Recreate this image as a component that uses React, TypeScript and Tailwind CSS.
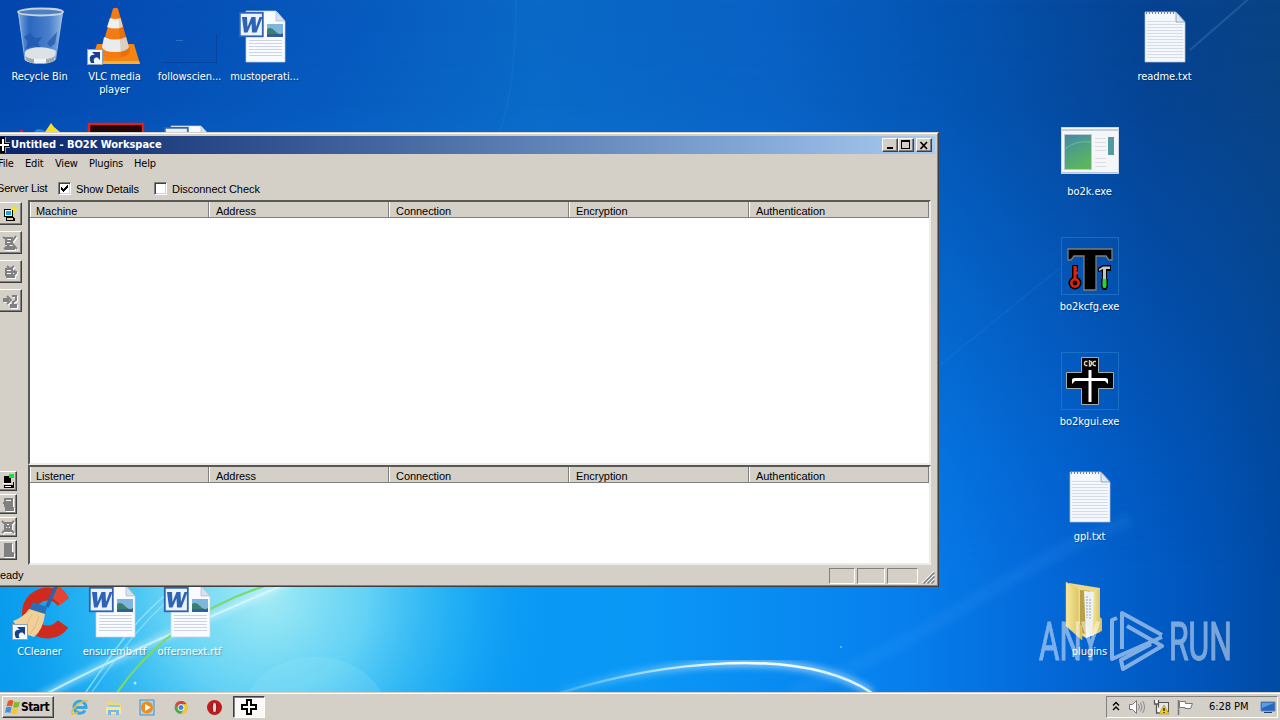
import type { ReactNode } from 'react'

const UI_FONT = "font-['DejaVu_Sans_Condensed','DejaVu_Sans',sans-serif]"

function Wallpaper() {
  return (
    <svg className="absolute inset-0" width="1280" height="720" viewBox="0 0 1280 720">
      <defs>
        <linearGradient id="sky" x1="0" y1="0" x2="1" y2="0">
          <stop offset="0" stopColor="#0345ad" />
          <stop offset="0.25" stopColor="#0757bd" />
          <stop offset="0.42" stopColor="#0a68c6" />
          <stop offset="0.6" stopColor="#0961c4" />
          <stop offset="0.75" stopColor="#0453b0" />
          <stop offset="0.9" stopColor="#064291" />
          <stop offset="1" stopColor="#094384" />
        </linearGradient>
        <linearGradient id="floor" x1="0" y1="0" x2="1" y2="0">
          <stop offset="0" stopColor="#079bec" />
          <stop offset="0.5" stopColor="#0a98f6" />
          <stop offset="0.7" stopColor="#0780ee" />
          <stop offset="0.82" stopColor="#0468d8" />
          <stop offset="0.93" stopColor="#0056bd" />
          <stop offset="1" stopColor="#004aa4" />
        </linearGradient>
        <linearGradient id="fade" x1="0" y1="0" x2="0" y2="1">
          <stop offset="0" stopColor="#fff" stopOpacity="0" />
          <stop offset="0.15" stopColor="#fff" stopOpacity="0.06" />
          <stop offset="0.65" stopColor="#fff" stopOpacity="0.85" />
          <stop offset="0.8" stopColor="#fff" />
        </linearGradient>
        <mask id="floorMask">
          <rect width="1280" height="720" fill="url(#fade)" />
        </mask>
        <radialGradient id="glow" gradientUnits="userSpaceOnUse" cx="265" cy="595" r="290">
          <stop offset="0" stopColor="#a4ecf4" />
          <stop offset="0.35" stopColor="#74dcf6" stopOpacity="0.85" />
          <stop offset="0.7" stopColor="#2fbdf6" stopOpacity="0.5" />
          <stop offset="1" stopColor="#0a98f6" stopOpacity="0" />
        </radialGradient>
        <linearGradient id="arc" x1="0" y1="0" x2="1" y2="0">
          <stop offset="0" stopColor="#bff0ff" stopOpacity="0.2" />
          <stop offset="0.55" stopColor="#fff" />
          <stop offset="1" stopColor="#d8f4ff" />
        </linearGradient>
        <filter id="soft">
          <feGaussianBlur stdDeviation="3" />
        </filter>
      </defs>
      <rect width="1280" height="720" fill="url(#sky)" />
      <rect width="1280" height="720" fill="url(#floor)" mask="url(#floorMask)" />
      <rect width="1280" height="720" fill="url(#glow)" />
      <g fill="none">
        <path d="M40 697C120 655 190 625 330 565" stroke="#dffaff" strokeOpacity="0.5" strokeWidth="7" filter="url(#soft)" />
        <path d="M40 697C120 655 190 625 330 565" stroke="#dffaff" strokeOpacity="0.7" strokeWidth="2" />
        <path d="M86 692C112 655 128 625 175 587" stroke="#a9ecfb" strokeOpacity="0.7" strokeWidth="1.5" />
        <path d="M92 692C122 650 150 610 190 584" stroke="#a9ecfb" strokeOpacity="0.5" strokeWidth="1.5" />
        <path d="M116 694C150 645 200 606 268 585" stroke="#79d96b" strokeWidth="2.2" />
        <path d="M560 693C660 662 800 645 872 693" stroke="url(#arc)" strokeWidth="8" strokeOpacity="0.5" filter="url(#soft)" />
        <path d="M560 693C660 662 800 645 872 693" stroke="url(#arc)" strokeWidth="2.5" />
        <path d="M790 693C920 648 1020 560 1130 520" stroke="#4fb3ff" strokeOpacity="0.1" strokeWidth="14" filter="url(#soft)" />
        <path d="M940 365L1060 268" stroke="#5cc0ff" strokeOpacity="0.08" strokeWidth="2" />
        <path d="M1190 50L1252 -4" stroke="#8fc4e8" strokeOpacity="0.18" strokeWidth="2" />
        <path d="M500 132C510 100 515 70 516 0" stroke="#59b2ea" strokeOpacity="0.08" strokeWidth="2" />
      </g>
      <ellipse cx="315" cy="715" rx="72" ry="58" fill="#a9eefb" fillOpacity="0.16" />
      <circle cx="135" cy="683" r="1.5" fill="#dffaff" fillOpacity="0.7" />
      <circle cx="841" cy="647" r="1.2" fill="#7cc4ff" fillOpacity="0.7" />
    </svg>
  )
}

function Shortcut() {
  return (
    <g>
      <rect x="2.5" y="42.5" width="15" height="15" fill="#f4f8fc" stroke="#8fa3b8" />
      <path d="M6 56C3 50 6 47 10 48L7 45H15V53L12.500 50.500C9 50 8 53 9.500 56Z" fill="#17418f" />
    </g>
  )
}

function RecycleBin() {
  return (
    <>
      <defs>
        <linearGradient id="glass" x1="0" y1="0" x2="1" y2="0">
          <stop offset="0" stopColor="#b6d2f0" stopOpacity="0.75" />
          <stop offset="0.25" stopColor="#4b82cc" stopOpacity="0.55" />
          <stop offset="0.7" stopColor="#7ba6de" stopOpacity="0.6" />
          <stop offset="1" stopColor="#d3e4f7" stopOpacity="0.75" />
        </linearGradient>
      </defs>
      <path d="M8 5L15 53C20 58 40 58 45 53L53 5Z" fill="url(#glass)" />
      <path d="M20 26l5 5 7-1-4 6 3 6-8-3-7 3 2-7-4-5z" fill="#2059b0" fillOpacity="0.85" />
      <path d="M37 36l10-11-2 12-5 3z" fill="#2059b0" fillOpacity="0.75" />
      <path d="M15 45C18 39 38 39 46 44L45 53C39 58 20 58 15 53Z" fill="#dce2e5" />
      <path d="M15 49C22 54 38 54 45 49L44 54C38 58 20 58 16 53Z" fill="#9da9b3" />
      <path d="M24 52h12v4h-12z" fill="#eef4f6" />
      <ellipse cx="30.500" cy="5" rx="22.500" ry="3.500" fill="#4e80c0" stroke="#c6d3e0" strokeWidth="1.800" />
      <path d="M8.500 6L15 53M52.500 6L45.500 53" stroke="#a9c4e2" strokeWidth="0.800" />
    </>
  )
}

function Vlc() {
  return (
    <>
      <path d="M12 37H49L55 57H12L7 52Z" fill="#f58413" />
      <path d="M12 54H54L55 57H12Z" fill="#ffb02e" />
      <path d="M28 1.500Q30 0 33 1.500L45 44Q45 51 30.500 51T16 44Z" fill="#f47a12" />
      <path d="M25 11Q30 13 35.500 11L38 20Q30 23 22 20Z" fill="#eef0ef" />
      <path d="M19 30Q30 35 41 30L44 40Q42 45 30 45T17 40Z" fill="#e9eceb" />
      <path d="M34 2L45 44Q44 49 36 50L33 2Z" fill="#a34600" fillOpacity="0.18" />
      <Shortcut />
    </>
  )
}

function GhostFile() {
  return (
    <>
      <rect x="3" y="27" width="53" height="28" fill="#0a4fae" fillOpacity="0.25" />
      <path d="M3 55.500H57M56.500 27V56" stroke="#063b8c" strokeOpacity="0.6" />
      <path d="M16 33.500h7" stroke="#3f83d2" strokeOpacity="0.6" />
    </>
  )
}

function WordDoc() {
  return (
    <>
      <path d="M11 4H41L50 14V55H11Z" fill="#f8fbff" stroke="#c6d1df" strokeWidth="0.700" />
      <path d="M41 4V14H50Z" fill="#d8e2ee" stroke="#9fb0c4" strokeWidth="0.600" />
      <path d="M14 33.500H47M14 36.500H47M14 39.500H47M14 42.500H47M14 45.500H47M14 48.500H47" stroke="#cdd3e4" />
      <rect x="32" y="17" width="16" height="13" fill="#7fb6de" />
      <path d="M32 22Q36 19 40 24T48 26V30H32Z" fill="#3a7f70" />
      <path d="M32 27H48V30H32Z" fill="#355f93" />
      <rect x="4.800" y="5.800" width="23" height="23.500" fill="#eaf2fc" stroke="#2c62b8" strokeWidth="1.800" />
      <path d="M7 10h5l.5 10 4-10h4l.5 10 3.500-10h3l-6 15.500h-4.500l-.5-9-4 9H9z" fill="#2e62b4" />
    </>
  )
}

function Notepad() {
  return (
    <>
      <path d="M10 5H41L50 15V55H10Z" fill="#f4f7fb" stroke="#b7c3d3" strokeWidth="0.700" />
      <path d="M11.500 4v3M14.500 4v3M17.500 4v3M20.500 4v3M23.500 4v3M26.500 4v3M29.500 4v3M32.500 4v3M35.500 4v3M38.500 4v3" stroke="#73859e" />
      <path d="M12 14.500H40M12 17.500H48M12 20.500H48M12 23.500H48M12 26.500H48M12 29.500H48M12 32.500H48M12 35.500H48M12 38.500H48M12 41.500H48M12 44.500H48M12 47.500H48M12 50.500H48" stroke="#d5dce7" />
      <path d="M41 5L50 15H41Z" fill="#dfe7f0" stroke="#8496ae" strokeWidth="0.800" />
    </>
  )
}

function CCleaner() {
  return (
    <>
      <path d="M53 20A19 19 0 1 0 53 42" fill="none" stroke="#ce2b1e" strokeWidth="13" />
      <path d="M48 4A27 27 0 0 1 59 16L50 23Q46 17 40 16Z" fill="#e44532" />
      <path d="M47 2L37 25" stroke="#2467ae" strokeWidth="3.500" />
      <path d="M23 20L37 25L35 32L19 28Z" fill="#286fb8" />
      <path d="M19 27L35 32Q33 48 24 55Q10 51 3 39Q14 35 19 27Z" fill="#f1cf98" />
      <path d="M22 32Q18 42 12 47M29 34Q27 44 20 52" stroke="#e0ba80" fill="none" />
      <Shortcut />
    </>
  )
}

function Browser() {
  return (
    <>
      <path d="M24 10Q28 4 36 10Z" fill="#1e87ef" />
      <path d="M35 10L41 1L44 5L50 10Z" fill="#f7df28" />
      <path d="M10 8h3v2h-3z" fill="#c02c5e" />
    </>
  )
}

function DarkApp() {
  return (
    <>
      <rect x="4" y="2" width="54" height="54" fill="#220708" stroke="#dd2222" strokeWidth="2.500" />
    </>
  )
}

function ExeWindow() {
  return (
    <>
      <defs>
        <linearGradient id="pane" x1="0" y1="0" x2="0.4" y2="1">
          <stop offset="0" stopColor="#4b84a8" />
          <stop offset="0.4" stopColor="#4b9c8b" />
          <stop offset="1" stopColor="#5cb55e" />
        </linearGradient>
      </defs>
      <rect x="1.500" y="5.500" width="57" height="46" fill="#f4f6f8" stroke="#cdd8e4" />
      <path d="M2 8h56" stroke="#c5d0dc" strokeWidth="2" />
      <rect x="4.500" y="12.500" width="27" height="35" fill="url(#pane)" stroke="#b9cdd6" />
      <path d="M5 27Q16 18 31 20" stroke="#8cc4ba" strokeOpacity="0.6" fill="none" />
      <path d="M35 16.500h11M35 20.500h11M35 24.500h11M35 28.500h11M35 36.500h11M35 40.500h11M35 44.500h11" stroke="#dadde1" />
      <rect x="48" y="15" width="6" height="18" fill="#5299a2" />
      <path d="M2 50.500h56" stroke="#bcc9da" />
    </>
  )
}

function Frame() {
  return <rect x="1.500" y="0.500" width="57" height="57" fill="none" stroke="#297cc6" strokeOpacity="0.65" />
}

function CfgIcon() {
  return (
    <>
      <Frame />
      <path d="M8 12H52V23H49L46 19H36V53H24V19H14L11 23H8Z" fill="#000" stroke="#7e7f79" strokeWidth="1.300" />
      <path d="M15 28V43" stroke="#000" strokeWidth="6" />
      <circle cx="15" cy="46" r="6.500" fill="#000" />
      <path d="M15 29V43M17 32h-2M18 36h-3" stroke="#e2200c" strokeWidth="3" />
      <circle cx="15" cy="46" r="3.700" fill="none" stroke="#e2200c" strokeWidth="2.600" />
      <path d="M38 35V31L43 28H51V34H47V42H48V50L46 53H43L41 50V42H42V34Z" fill="#000" />
      <path d="M39 34V32L43 29.500H50V32H46V42H43V32Z" fill="#c4c7c3" />
      <path d="M42.500 42H46.500V49L45.500 51H43.500L42.500 49Z" fill="#18df28" />
    </>
  )
}

function GuiIcon() {
  return (
    <>
      <Frame />
      <path d="M21.500 5.500H38.500V20.500H53.500V36.500H38.500V52.500H21.500V36.500H6.500V20.500H21.500Z" fill="#000" stroke="#a5aba4" />
      <path d="M30 18V50" stroke="#fff" strokeWidth="3" />
      <path d="M12 32V28Q12 26 15 26H45Q48 26 48 28V32L45 29H15Z" fill="#fff" />
      <path d="M27.500 9.500h-2l-1 1v2l1 1h2M29.500 8v6h1l1-2v-2l-1-1M36 9.500h-2l-1 1v2l1 1h2" stroke="#d8cdb6" strokeWidth="1.400" fill="none" />
    </>
  )
}

function Folder() {
  return (
    <>
      <defs>
        <linearGradient id="folder" x1="0" y1="0" x2="1" y2="0">
          <stop offset="0" stopColor="#f7e9a1" />
          <stop offset="1" stopColor="#d9bb58" />
        </linearGradient>
      </defs>
      <path d="M9 1L40 6V50L26 56L9 46Z" fill="#ecd987" />
      <path d="M20 8L30 9V54L20 50Z" fill="#b99f47" />
      <path d="M24 9L34 10V53L26 56Z" fill="#eef1f2" />
      <path d="M27 14v22M30 17v20" stroke="#9ba9b6" strokeDasharray="2 1" />
      <path d="M34 9L40 7V35L42 37V49L32 53Z" fill="url(#folder)" />
      <path d="M6 0L18 7V41L22 44V58L6 44Z" fill="url(#folder)" stroke="#dfc669" strokeWidth="0.500" />
    </>
  )
}

interface DesktopItem {
  label: string
  col: number
  row: number
  icon: ReactNode
}

const desktopItems: DesktopItem[] = [
  { label: 'Recycle Bin', col: 2, row: 0, icon: <RecycleBin /> },
  { label: 'VLC media player', col: 77, row: 0, icon: <Vlc /> },
  { label: 'followscien...', col: 152, row: 0, icon: <GhostFile /> },
  { label: 'mustoperati...', col: 227, row: 0, icon: <WordDoc /> },
  { label: '', col: 2, row: 115, icon: <Browser /> },
  { label: '', col: 77, row: 115, icon: <DarkApp /> },
  { label: '', col: 152, row: 115, icon: <WordDoc /> },
  { label: 'CCleaner', col: 2, row: 575, icon: <CCleaner /> },
  { label: 'ensuremb.rtf', col: 77, row: 575, icon: <WordDoc /> },
  { label: 'offersnext.rtf', col: 152, row: 575, icon: <WordDoc /> },
  { label: 'readme.txt', col: 1127, row: 0, icon: <Notepad /> },
  { label: 'bo2k.exe', col: 1052, row: 115, icon: <ExeWindow /> },
  { label: 'bo2kcfg.exe', col: 1052, row: 230, icon: <CfgIcon /> },
  { label: 'bo2kgui.exe', col: 1052, row: 345, icon: <GuiIcon /> },
  { label: 'gpl.txt', col: 1052, row: 460, icon: <Notepad /> },
  { label: 'plugins', col: 1052, row: 575, icon: <Folder /> },
]

function DesktopIcon({ item }: { item: DesktopItem }) {
  return (
    <div className="absolute w-[75px] pt-[7px] flex flex-col" style={{ left: item.col, top: item.row }}>
      <svg className="ml-2" width="60" height="60" viewBox="0 0 60 60">
        {item.icon}
      </svg>
      <span
        className={`mt-[3px] px-0.5 text-center text-[11px] leading-[13px] tracking-[-0.07px] text-white [text-shadow:1px_1px_1px_rgba(0,0,0,0.3)] ${UI_FONT}`}
      >
        {item.label}
      </span>
    </div>
  )
}

function Watermark() {
  return (
    <svg className="absolute left-[1030px] top-[605px]" width="230" height="72" viewBox="0 0 230 72">
      <g fill="#fff" stroke="#fff" strokeWidth="1.200" opacity="0.48" fontFamily="Roboto, sans-serif" fontSize="53">
        <text x="9" y="55" textLength="61" lengthAdjust="spacingAndGlyphs">ANY</text>
        <text x="139" y="55" textLength="63" lengthAdjust="spacingAndGlyphs">RUN</text>
      </g>
      <g fill="none" stroke="#fff" opacity="0.5" strokeWidth="4" strokeLinejoin="round">
        <path d="M92 44V8L132 30" />
        <path d="M87 13L82 15V54L132 32" />
        <path d="M97 21L132 41L93 64L91 55L121 39" />
      </g>
    </svg>
  )
}

function Raised({ className, children }: { className: string; children?: ReactNode }) {
  return (
    <div
      className={`flex items-center justify-center bg-[#d4d0c8] border border-t-white border-l-white border-r-[#404040] border-b-[#404040] shadow-[inset_-1px_-1px_0_#808080] ${className}`}
    >
      {children}
    </div>
  )
}

function CrossGlyph() {
  return (
    <svg width="16" height="16" viewBox="0 0 16 16" shapeRendering="crispEdges">
      <path d="M5 0H11V5H16V11H11V16H5V11H0V5H5Z" fill="#000" />
      <path d="M7 2H9V7H14V9H9V14H7V9H2V7H7Z" fill="#fff" />
    </svg>
  )
}

function ServerGlyph() {
  return (
    <svg width="16" height="16" viewBox="0 0 16 16" shapeRendering="crispEdges">
      <path d="M2 3h9v8H2z" fill="#000" />
      <path d="M3 4h7v6H3z" fill="#fff" />
      <path d="M4 5h5v4H4z" fill="#1aa6d8" />
      <path d="M4 11h8v1h1v3H4z" fill="#000" />
      <path d="M5 12h6v2H5z" fill="#d8d6a0" />
      <path d="M11 0h2v2h3v2h-3v3h-2V4H9V2h2z" fill="#f2e62c" />
    </svg>
  )
}

// Disabled buttons show an embossed grey shape with a white offset copy.
function Embossed({ d }: { d: string }) {
  return (
    <svg width="16" height="16" viewBox="0 0 16 16">
      <path d={d} transform="translate(1 1)" fill="none" stroke="#fff" strokeWidth="2" />
      <path d={d} fill="none" stroke="#808080" strokeWidth="2" />
    </svg>
  )
}

const serverGlyphs = [
  'M4 3h6v6H4zM4 6h6M4 12h8v2H3M1 2l4 3M14 1l-5 7-7 6M9 7l6 7',
  'M4 5h6v6H4zM4 8h6M4 13h9M5 2l3 3 4-3M10 8h5M12 6l2 3-3 3',
  'M1 6h6M1 8h6M5 3l4 4-4 4M10 3h4v4l-4 3M8 12h6v2H8M11 8v4',
]

const listenerGlyphs = [
  'M5 3h7v7H5zM5 6h7M5 8h7M3 7h5M5 12h8v2H5',
  'M2 2l12 12M14 2L2 14M5 4h6v6H5zM5 7h6M5 12h8',
  'M5 2h6v8H5zM7 3v7M9 3v7M4 12h9v2H4M11 10l3 2',
]

const serverColumns = ['Machine', 'Address', 'Connection', 'Encryption', 'Authentication']
const listenerColumns = ['Listener', 'Address', 'Connection', 'Encryption', 'Authentication']

function ListView({ columns, className }: { columns: string[]; className: string }) {
  return (
    <div className={`w-[903px] bg-white border-2 border-t-[#5a5853] border-l-[#5a5853] border-r-[#eeece8] border-b-[#eeece8] ${className}`}>
      <div className="flex h-4">
        {columns.map((name, i) => (
          <div
            key={name}
            className={`h-4 leading-[15px] pt-0.5 bg-[#d4d0c8] border-b border-r border-[#808080] shadow-[inset_1px_0_0_#fff] ${i === 0 ? 'w-[179px] pl-1.5' : 'w-[180px] pl-[7px]'}`}
          >
            {name}
          </div>
        ))}
      </div>
    </div>
  )
}

function Checkbox({ checked }: { checked: boolean }) {
  return (
    <div className="w-[13px] h-[13px] bg-white border border-t-[#808080] border-l-[#808080] border-r-white border-b-white shadow-[inset_1px_1px_0_#404040,inset_-1px_-1px_0_#d4d0c8]">
      {checked && (
        <svg width="11" height="11" viewBox="0 0 11 11" shapeRendering="crispEdges">
          <path d="M2 4h1v1h1v1h1V5h1V4h1V3h1V2h1v3H8v1H7v1H6v1H5v1H4V8H3V7H2z" fill="#000" />
        </svg>
      )}
    </div>
  )
}

function WorkspaceWindow() {
  return (
    <div className="absolute left-[-5px] top-[132px] w-[944px] h-[455px] flex flex-col bg-[#d4d0c8] border border-t-[#d4d0c8] border-l-[#d4d0c8] border-r-[#404040] border-b-[#404040] font-['Liberation_Sans',Arial,sans-serif] text-[11px] tracking-[-0.05px] text-black">
      <div className="flex-1 flex flex-col pt-0.5 pl-[3px] pr-0.5 border-t border-t-white border-r border-r-[#808080] border-b border-b-[#808080]">
        <div className="flex items-center h-[18px] pr-[3px] bg-linear-to-r from-[#0a246a] to-[#a6caf0]">
          <div className="w-3 overflow-hidden flex justify-end shrink-0">
            <svg className="shrink-0" width="16" height="16" viewBox="0 0 16 16" shapeRendering="crispEdges">
              <path d="M3 0H11V5H15V11H11V16H3Z" fill="#000" />
              <path d="M10 0h1v5h4v1h-5zM10 10h5v1h-4v5h-1z" fill="#9a9a9a" />
              <path d="M7 2H9V7H14V9H9V14H7V9H2V7H7Z" fill="#fff" />
            </svg>
          </div>
          <span className={`flex-1 text-white font-bold tracking-[-0.02px] ${UI_FONT}`}>Untitled - BO2K Workspace</span>
          <div className="flex">
            <Raised className="w-4 h-3.5">
              <svg width="12" height="10" viewBox="0 0 12 10" shapeRendering="crispEdges"><path d="M3 7h6v2H3z" /></svg>
            </Raised>
            <Raised className="w-4 h-3.5">
              <svg width="12" height="10" viewBox="0 0 12 10" shapeRendering="crispEdges"><path fillRule="evenodd" d="M1 0h9v9H1zM2 2h7v6H2z" /></svg>
            </Raised>
            <Raised className="w-4 h-3.5 ml-0.5">
              <svg width="10" height="9" viewBox="0 0 10 9"><path d="M1.500 1L8 8M8 1L1.500 8" stroke="#000" strokeWidth="1.700" /></svg>
            </Raised>
          </div>
        </div>

        <div className={`flex h-5 items-center pt-px tracking-[-0.2px] ${UI_FONT}`}>
          <span className="w-[26px] -ml-px mr-px">File</span>
          <span className="w-[30px]">Edit</span>
          <span className="w-[34px]">View</span>
          <span className="w-[45px]">Plugins</span>
          <span>Help</span>
        </div>

        <div className="flex h-[26px] pt-2 items-start leading-[13px]">
          <span className="w-[59px] -ml-0.5 mr-0.5 tracking-[-0.2px]">Server List</span>
          <Checkbox checked />
          <span className="w-[78px] ml-[5px] pt-px tracking-[-0.12px]">Show Details</span>
          <Checkbox checked={false} />
          <span className="ml-[5px] pt-px">Disconnect Check</span>
        </div>

        <div className="flex h-[365px]">
          <div className="w-[29px] flex flex-col items-start pt-0.5">
            <Raised className="w-[23px] h-[23px] mb-1.5 pr-0.5"><ServerGlyph /></Raised>
            {serverGlyphs.map((d) => (
              <Raised key={d} className="w-[23px] h-[23px] mb-1.5 pr-0.5"><Embossed d={d} /></Raised>
            ))}
            <div className="mt-[153px] flex flex-col gap-[3px]">
              <Raised className="w-[18px] h-5">
                <svg width="16" height="16" viewBox="0 0 16 16" shapeRendering="crispEdges">
                  <path d="M4 3h7v7H4zM4 12h9V9h1v6H4z" fill="#000" />
                  <path d="M3 10h8v1H3zM5 13h6v1H5z" fill="#fff" />
                  <path d="M9 1h5v4H9z" fill="#1be03a" />
                </svg>
              </Raised>
              {listenerGlyphs.map((d) => (
                <Raised key={d} className="w-[18px] h-5"><Embossed d={d} /></Raised>
              ))}
            </div>
          </div>
          <div>
            <ListView columns={serverColumns} className="h-[265px]" />
            <ListView columns={listenerColumns} className="h-[100px]" />
          </div>
        </div>

        <div className="flex flex-1 items-center">
          <span className="-ml-[7px] flex-1">Ready</span>
          <div className="flex gap-0.5 pt-px">
            <div className="w-[26px] h-4 border border-t-[#808080] border-l-[#808080] border-r-white border-b-white" />
            <div className="w-7 h-4 border border-t-[#808080] border-l-[#808080] border-r-white border-b-white" />
            <div className="w-[31px] h-4 border border-t-[#808080] border-l-[#808080] border-r-white border-b-white" />
          </div>
          <svg className="ml-1 mt-1" width="13" height="13" viewBox="0 0 13 13">
            <path d="M0 12L12 0M4 12L12 4M8 12L12 8" stroke="#fff" />
            <path d="M1.500 12.500L12.500 1.500M5.500 12.500L12.500 5.500M9.500 12.500L12.500 9.500" stroke="#808080" strokeWidth="1.500" />
          </svg>
        </div>
      </div>
    </div>
  )
}

function WindowsFlag() {
  return (
    <svg width="16" height="16" viewBox="0 0 16 16">
      <path d="M3 2Q6 0 8.500 2L7 7.500Q4 6 1.500 7.500Z" fill="#e8572a" />
      <path d="M9.500 2.500Q12 4 15 2.500L13.500 8Q11 9.500 8 8Z" fill="#7fba35" />
      <path d="M1.200 8.500Q4 7 6.700 8.500L5.200 14Q3 12.500 0 14Z" fill="#3f8fdd" />
      <path d="M7.700 9Q10 10.500 13.200 9L11.700 14.500Q9 16 6.200 14.500Z" fill="#f9c62d" />
    </svg>
  )
}

function Taskbar() {
  return (
    <div className={`absolute left-0 bottom-0 w-[1280px] h-7 flex items-start pt-[3px] bg-[#d4d0c8] border-t border-t-[#d4d0c8] shadow-[inset_0_1px_0_#fff] text-[11px] text-black ${UI_FONT}`}>
      <Raised className="ml-0.5 w-[52px] h-[22px] pr-0.5 font-bold text-[12px] tracking-[-0.5px]">
        <WindowsFlag />
        Start
      </Raised>
      <div className="flex gap-4 ml-[17px] mt-[3px]">
        <svg width="18" height="17" viewBox="0 0 18 17">
          <path d="M14 11.500A6 6 0 1 1 15 8.500H5" fill="none" stroke="#3ca5df" strokeWidth="3" />
          <path d="M1 15C-1 10 12 0 17 2" fill="none" stroke="#eabf3c" strokeWidth="1.500" />
          <path d="M1 15Q3 16 7 13" fill="none" stroke="#eabf3c" strokeWidth="1.500" />
        </svg>
        <svg width="18" height="17" viewBox="0 0 18 17">
          <path d="M2 2h6l1 2h7v10H2z" fill="#f0d873" />
          <path d="M3 6h12v3H3z" fill="#8fcbea" />
          <path d="M1 8h15v7H1z" fill="#f6e69a" />
          <path d="M3 16v-5h11v5h-3v-3H6v3z" fill="#79b9e2" />
        </svg>
        <svg width="17" height="17" viewBox="0 0 17 17">
          <rect x="1" y="1" width="14" height="15" fill="#a9d4ef" stroke="#4b91c5" />
          <circle cx="8" cy="8.500" r="6" fill="#f38a17" />
          <path d="M6 5l6 3.500L6 12z" fill="#fff" />
        </svg>
        <svg width="18" height="17" viewBox="0 0 18 17">
          <circle cx="9" cy="8.500" r="6.500" fill="#4ca94e" />
          <path d="M3.400 5.200A6.500 6.500 0 0 1 14.700 5.300H9L6.200 10.200Z" fill="#df4335" />
          <path d="M14.700 5.300A6.500 6.500 0 0 1 9 15L12 9.500L11 5.300Z" fill="#f7c92d" />
          <circle cx="9" cy="8.500" r="3" fill="#3e80e6" stroke="#fff" />
        </svg>
        <svg width="18" height="17" viewBox="0 0 18 17">
          <ellipse cx="8.500" cy="8.500" rx="7.500" ry="7.500" fill="#c4191c" />
          <ellipse cx="8.500" cy="8.500" rx="2.200" ry="5.200" fill="#e8d4d0" stroke="#7e0b0d" />
        </svg>
      </div>
      <div className="ml-[9px] w-8 h-[22px] flex items-center justify-center bg-[#faf9f7] border border-t-[#404040] border-l-[#404040] border-r-white border-b-white shadow-[inset_1px_1px_0_#808080]">
        <CrossGlyph />
      </div>
      <div className="ml-auto mr-0.5 w-[172px] h-[22px] flex items-center border border-t-[#808080] border-l-[#808080] border-r-white border-b-white">
        <svg className="ml-[5px]" width="8" height="12" viewBox="0 0 8 12">
          <path d="M1 4.500l3-3 3 3M1 9l3-3 3 3" fill="none" stroke="#000" strokeWidth="1.400" />
        </svg>
        <svg className="ml-2" width="18" height="16" viewBox="0 0 18 16">
          <path d="M1.500 5.500h3l4-4v13l-4-4h-3z" fill="#fff" stroke="#777" />
          <path d="M10.500 5q2 3 0 6M12.500 3.500q3 4.500 0 9M14.500 2q4 6 0 12" fill="none" stroke="#8b8b8b" />
        </svg>
        <svg className="ml-[7px]" width="17" height="16" viewBox="0 0 17 16">
          <rect x="5.500" y="3.500" width="10" height="9" fill="#dfe5e8" stroke="#555" />
          <path d="M1.500 1v4h4V1M3.500 5v9h5" fill="#fff" stroke="#555" strokeWidth="1.300" />
          <path d="M11 6l5 9H6z" fill="#f5ce20" stroke="#a88600" strokeWidth="0.600" />
          <path d="M11 9v3M11 13v1" stroke="#000" strokeWidth="1.200" />
        </svg>
        <svg className="ml-[7px]" width="17" height="16" viewBox="0 0 17 16">
          <path d="M1.500 1v15" stroke="#777" strokeWidth="1.500" />
          <path d="M2.500 2.500h6v2h7l-2 5H8v-1H2.500z" fill="#fff" stroke="#777" />
        </svg>
        <span className="ml-[15px] w-[45px] pt-px whitespace-nowrap tracking-[-0.05px]">6:28 PM</span>
        <svg className="ml-[6px]" width="16" height="14" viewBox="0 0 16 14">
          <path d="M1 2h14v9H1z" fill="#2467bd" stroke="#5d86b8" />
          <path d="M2 3h12L2 8z" fill="#5b9be2" />
          <path d="M4 12h8v1H4z" fill="#1c3e73" />
        </svg>
      </div>
    </div>
  )
}

export default function App() {
  return (
    <div className="relative w-[1280px] h-[720px] overflow-hidden bg-[#0757bd]">
      <Wallpaper />
      {desktopItems.map((item) => (
        <DesktopIcon key={`${item.col}-${item.row}`} item={item} />
      ))}
      <Watermark />
      <WorkspaceWindow />
      <Taskbar />
    </div>
  )
}
